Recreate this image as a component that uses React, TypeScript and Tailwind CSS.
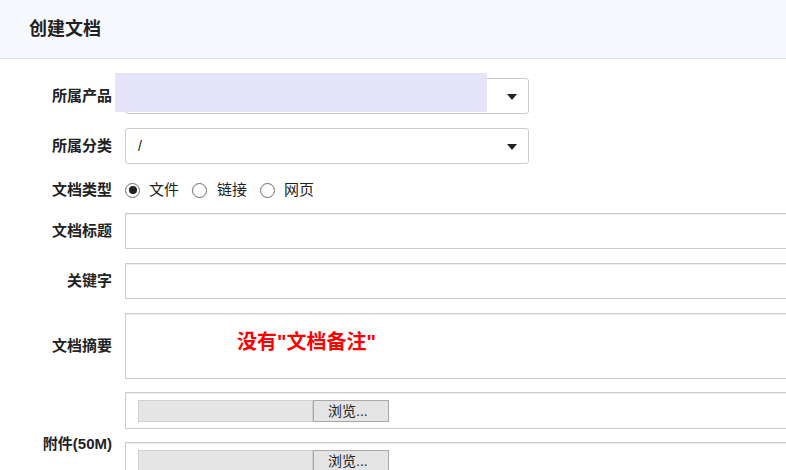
import React from 'react';

const font = { fontFamily: '"Liberation Sans", "Noto Sans CJK SC", sans-serif' };

function Label({ children, className = '' }: { children: React.ReactNode; className?: string }) {
  return (
    <div className={`w-[112px] shrink-0 text-right text-[15px] font-bold text-[#222] ${className}`}>
      {children}
    </div>
  );
}

function Caret() {
  return (
    <svg width="10" height="6" viewBox="0 0 10 6" className="absolute right-[11px] top-[15px]">
      <path d="M0 0 L10 0 L5 6 Z" fill="#222" />
    </svg>
  );
}

function Radio({ checked = false }: { checked?: boolean }) {
  return (
    <span className="flex h-[15px] w-[15px] shrink-0 items-center justify-center rounded-full border border-[#6b6b6b] bg-white">
      {checked && <span className="h-[8px] w-[8px] rounded-full bg-[#222]" />}
    </span>
  );
}

const inputCls =
  'h-[36px] w-[680px] shrink-0 border border-[#ccc] bg-white shadow-[inset_0_1px_1px_rgba(0,0,0,0.075)]';

function FileBox() {
  return (
    <div className="h-[37px] w-[680px] shrink-0 border border-[#ccc] bg-white pl-[12px] pt-[7px] shadow-[inset_0_1px_1px_rgba(0,0,0,0.075)]">
      <div className="flex h-[22px]">
        <div className="h-full w-[175px] border border-[#d0d0d0] bg-[#e5e5e5]" />
        <div className="flex h-full w-[76px] items-center border border-[#a9a9a9] bg-[#e4e4e4] pl-[14px] text-[14px] text-[#222]">
          浏览...
        </div>
      </div>
    </div>
  );
}

export default function App() {
  return (
    <div className="h-[470px] w-[786px] overflow-hidden bg-white" style={font}>
      <div className="flex h-[59px] items-center border-b border-[#e3e3e3] bg-[#f8f9fe] pl-[29px]">
        <h1 className="text-[18px] font-bold text-[#222]">创建文档</h1>
      </div>

      <div className="relative flex flex-col pt-[19px]">
        {/* 所属产品 */}
        <div className="flex h-[36px] items-center gap-[13px]">
          <Label>所属产品</Label>
          <div className="relative h-[36px] w-[404px] shrink-0 rounded-[3px] border border-[#ccc] bg-white">
            <Caret />
          </div>
        </div>
        <div className="absolute left-[115px] top-[14px] h-[39px] w-[372px] bg-[#e6e4f8]" />

        {/* 所属分类 */}
        <div className="mt-[14px] flex h-[36px] items-center gap-[13px]">
          <Label>所属分类</Label>
          <div className="relative flex h-[36px] w-[404px] shrink-0 items-center rounded-[3px] border border-[#ccc] bg-white pl-[12px] text-[14px] text-[#222]">
            /
            <Caret />
          </div>
        </div>

        {/* 文档类型 */}
        <div className="mt-[14px] flex h-[24px] items-center gap-[13px]">
          <Label>文档类型</Label>
          <div className="flex items-center text-[15px] text-[#222]">
            <Radio checked />
            <span className="ml-[9px]">文件</span>
            <span className="ml-[13px]">
              <Radio />
            </span>
            <span className="ml-[10px]">链接</span>
            <span className="ml-[13px]">
              <Radio />
            </span>
            <span className="ml-[9px]">网页</span>
          </div>
        </div>

        {/* 文档标题 */}
        <div className="mt-[11px] flex h-[36px] items-center gap-[13px]">
          <Label>文档标题</Label>
          <div className={inputCls} />
        </div>

        {/* 关键字 */}
        <div className="mt-[14px] flex h-[36px] items-center gap-[13px]">
          <Label>关键字</Label>
          <div className={inputCls} />
        </div>

        {/* 文档摘要 */}
        <div className="mt-[14px] flex h-[66px] items-center gap-[13px]">
          <Label>文档摘要</Label>
          <div className="relative h-[66px] w-[680px] shrink-0 border border-[#ccc] bg-white shadow-[inset_0_1px_1px_rgba(0,0,0,0.075)]">
            <span className="absolute left-[111px] top-[13px] text-[20px] font-bold text-[#ff0000]">
              没有"文档备注"
            </span>
          </div>
        </div>

        {/* 附件 */}
        <div className="mt-[13px] flex items-center gap-[13px]">
          <Label className="pt-[17px]">附件(50M)</Label>
          <div className="flex flex-col gap-[13px]">
            <FileBox />
            <FileBox />
          </div>
        </div>
      </div>
    </div>
  );
}
